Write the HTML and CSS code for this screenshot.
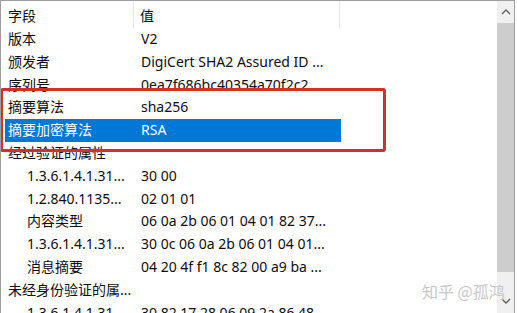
FILE: index.html
```html
<!DOCTYPE html>
<html lang="zh-CN">
<head>
<meta charset="utf-8">
<link rel="stylesheet" href="styles.css">
</head>
<body>
<div class="listview">
  <div class="main">
    <div class="header">
      <div class="hcol h1">字段</div>
      <div class="hcol h2">值</div>
      <div class="hcol h3"></div>
    </div>
    <div class="rows">
      <div class="row"><span class="c1">版本</span><span class="c2">V2</span></div>
      <div class="row"><span class="c1">颁发者</span><span class="c2">DigiCert SHA2 Assured ID ...</span></div>
      <div class="row"><span class="c1">序列号</span><span class="c2">0ea7f686bc40354a70f2c2</span></div>
      <div class="row"><span class="c1">摘要算法</span><span class="c2">sha256</span></div>
      <div class="row selected"><span class="c1">摘要加密算法</span><span class="c2">RSA</span></div>
      <div class="row"><span class="c1">经过验证的属性</span><span class="c2"></span></div>
      <div class="row child"><span class="c1">1.3.6.1.4.1.31...</span><span class="c2">30 00</span></div>
      <div class="row child"><span class="c1">1.2.840.1135...</span><span class="c2">02 01 01</span></div>
      <div class="row child"><span class="c1">内容类型</span><span class="c2">06 0a 2b 06 01 04 01 82 37...</span></div>
      <div class="row child"><span class="c1">1.3.6.1.4.1.31...</span><span class="c2">30 0c 06 0a 2b 06 01 04 01...</span></div>
      <div class="row child"><span class="c1">消息摘要</span><span class="c2">04 20 4f f1 8c 82 00 a9 ba ...</span></div>
      <div class="row"><span class="c1">未经身份验证的属...</span><span class="c2"></span></div>
      <div class="row child"><span class="c1">1.3.6.1.4.1.31...</span><span class="c2">30 82 17 28 06 09 2a 86 48</span></div>
    </div>
  </div>
  <div class="scrollbar">
    <div class="sbtn up">
      <svg width="10" height="6" viewBox="0 0 10 6"><polyline points="1,5 5,1 9,5" fill="none" stroke="#606060" stroke-width="1.4"/></svg>
    </div>
    <div class="track"><div class="thumb"></div></div>
    <div class="sbtn down">
      <svg width="10" height="6" viewBox="0 0 10 6"><polyline points="1,1 5,5 9,1" fill="none" stroke="#606060" stroke-width="1.4"/></svg>
    </div>
  </div>
  <div class="annot"></div>
  <div class="watermark">知乎 @孤鸿</div>
</div>
</body>
</html>
```
FILE: styles.css
```css
html, body {
  margin: 0;
  padding: 0;
  background: #ffffff;
}
body {
  width: 517px;
  height: 313px;
  overflow: hidden;
  font-family: "Noto Sans", "Noto Sans CJK SC", sans-serif;
  font-size: 14px;
  color: #0d0d0d;
}
.listview {
  position: relative;
  width: 513px;
  height: 330px;
  border: 1px solid #9e9e9e;
  border-bottom: none;
  display: flex;
  overflow: hidden;
}
.main {
  flex: 1;
  display: flex;
  flex-direction: column;
  min-width: 0;
}
.header {
  display: grid;
  grid-template-columns: 133px 206px 1fr;
  height: 27px;
}
.hcol {
  padding-top: 3px;
  line-height: 23px;
  white-space: nowrap;
}
.h1 {
  padding-left: 7px;
  border-right: 1px solid #e5e5e5;
}
.h2 {
  padding-left: 6px;
  border-right: 1px solid #e5e5e5;
}
.rows {
  display: flex;
  flex-direction: column;
}
.row {
  display: grid;
  grid-template-columns: 133px 203px;
  width: 336px;
  margin-left: 4px;
  height: 22.8px;
  line-height: 22.8px;
  white-space: nowrap;
}
.row span {
  overflow: hidden;
  white-space: nowrap;
}
.c1 {
  padding-left: 3px;
}
.c2 {
  padding-left: 3px;
}
.child .c1 {
  padding-left: 22px;
}
.selected {
  background: #0078d7;
  color: #ffffff;
}
.scrollbar {
  width: 17px;
  background: #f0f0f0;
  display: flex;
  flex-direction: column;
  height: 312px;
}
.sbtn {
  height: 22px;
  display: flex;
  align-items: center;
  justify-content: center;
}
.track {
  flex: 1;
  display: flex;
  flex-direction: column;
}
.thumb {
  height: 249px;
  background: #cdcdcd;
}
.sbtn.down {
  height: 22px;
  align-items: flex-start;
  padding-top: 7px;
  box-sizing: border-box;
}
.annot {
  position: absolute;
  left: -1px;
  top: 87px;
  width: 380px;
  height: 58px;
  border: 3px solid #d52f28;
  border-radius: 3px;
}
.watermark {
  position: absolute;
  left: 421px;
  top: 278px;
  font-size: 16px;
  color: #c8c8c8;
  white-space: nowrap;
  font-family: "Noto Sans CJK SC", sans-serif;
}
```
